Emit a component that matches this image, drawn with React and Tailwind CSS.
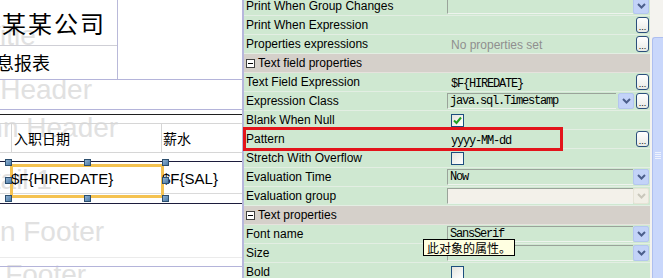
import React from "react";

const rows = [
  { label: "Print When Group Changes", kind: "combo" },
  { label: "Print When Expression", kind: "dots" },
  { label: "Properties expressions", kind: "dots", hint: "No properties set" },
  { section: "Text field properties" },
  { label: "Text Field Expression", kind: "dots", value: "$F{HIREDATE}" },
  { label: "Expression Class", kind: "comboDots", value: "java.sql.Timestamp" },
  { label: "Blank When Null", kind: "check", checked: true },
  { label: "Pattern", kind: "dots", value: "yyyy-MM-dd" },
  { label: "Stretch With Overflow", kind: "check" },
  { label: "Evaluation Time", kind: "combo", value: "Now" },
  { label: "Evaluation group", kind: "combo", disabled: true },
  { section: "Text properties" },
  { label: "Font name", kind: "combo", value: "SansSerif" },
  { label: "Size", kind: "combo" },
  { label: "Bold", kind: "check" },
];

const DropBtn = ({ disabled }) => (
  <div
    className={`w-[16px] h-[16px] shrink-0 rounded-[2px] border flex items-center justify-center ${
      disabled ? "bg-[#f1efe6] border-[#e6e3d6]" : "bg-[#c3d3f8] border-[#b4c6ef]"
    }`}
  >
    <svg width="9" height="6" viewBox="0 0 9 6">
      <path
        d="M1 1 L4.5 4.5 L8 1"
        fill="none"
        stroke={disabled ? "#c9c7bb" : "#4c5f8c"}
        strokeWidth="2"
      />
    </svg>
  </div>
);

const DotsBtn = () => (
  <div className="w-[13px] h-[16px] shrink-0 rounded-[3px] border border-[#2b4f7c] bg-gradient-to-b from-white to-[#e8ebe6] flex items-end justify-center text-[9px] leading-[9px] text-black">
    ...
  </div>
);

const Check = ({ checked }) => (
  <div className="w-[13px] h-[13px] border border-[#1c4d7e] bg-gradient-to-br from-[#e4e4de] to-white flex items-center justify-center">
    {checked && (
      <svg width="9" height="9" viewBox="0 0 9 9">
        <path d="M1 4.5 L3.5 7 L8 1.5" fill="none" stroke="#21a121" strokeWidth="2" />
      </svg>
    )}
  </div>
);

const Mono = ({ children }) => (
  <span className="font-['Liberation_Mono',monospace] text-[12px] tracking-[-1.2px] text-black">
    {children}
  </span>
);

function Value({ row }) {
  if (row.kind === "check") {
    return (
      <div className="flex items-center h-full pl-[4px]">
        <Check checked={row.checked} />
      </div>
    );
  }
  if (row.kind === "dots") {
    return (
      <div className="flex items-center h-full pl-[4px] pr-[1px]">
        <div className="flex-1 truncate">
          {row.hint ? (
            <span className="text-[12px] text-[#8f8f8f]">{row.hint}</span>
          ) : (
            <Mono>{row.value}</Mono>
          )}
        </div>
        <DotsBtn />
      </div>
    );
  }
  const field = (
    <div
      className={`flex-1 h-[16px] flex items-center pl-[2px] border-t border-l border-[#9aa39a] border-b border-b-[#eef3ee] ${
        row.disabled ? "bg-[#f3f1ea]" : ""
      }`}
    >
      <Mono>{row.value}</Mono>
    </div>
  );
  if (row.kind === "comboDots") {
    return (
      <div className="flex items-center h-full gap-[2px] pr-[1px]">
        {field}
        <DropBtn />
        <DotsBtn />
      </div>
    );
  }
  return (
    <div className="flex items-center h-full pr-[1px]">
      {field}
      <DropBtn disabled={row.disabled} />
    </div>
  );
}

const Ghost = ({ children, className }) => (
  <div
    className={`absolute whitespace-nowrap leading-none text-[28px] text-[#e1e1e1] font-['Liberation_Sans',Arial,sans-serif] ${className}`}
  >
    {children}
  </div>
);

const Handle = ({ className }) => (
  <div
    className={`absolute w-[7px] h-[7px] border border-[#2d4f6e] bg-gradient-to-br from-[#8fb1d2] to-[#4b7aa6] ${className}`}
  />
);

function Designer() {
  return (
    <div className="relative w-[244px] h-[278px] shrink-0 overflow-hidden bg-white border-r-2 border-r-[#b7b7dc] font-['Liberation_Sans',Arial,sans-serif]">
      {/* ghost band names */}
      <Ghost className="left-[-16px] top-[22px] text-[26px]">Title</Ghost>
      <Ghost className="left-[-73px] top-[76px]">Page Header</Ghost>
      <Ghost className="left-[-78px] top-[114px]">Column Header</Ghost>
      <Ghost className="left-[-43px] top-[166px]">Detail 1</Ghost>
      <Ghost className="left-[-81px] top-[218px]">Column Footer</Ghost>
      <Ghost className="left-[-68px] top-[261px]">Page Footer</Ghost>

      <div className="relative flex flex-col">
        {/* title */}
        <div className="h-[80px] border-b border-[#b4b4da] flex">
          <div className="w-[118px] border-r border-[#b9b9d9] flex flex-col">
            <div className="h-[46px] border-b border-[#cfcfd6] flex items-center pl-[2px] text-[24px] tracking-[2px] text-black font-['Noto_Sans_CJK_SC',sans-serif]">
              某某公司
            </div>
            <div className="flex-1 flex items-center text-[18px] text-black font-['Noto_Sans_CJK_SC',sans-serif] -ml-[4px]">
              息报表
            </div>
          </div>
        </div>
        {/* page header */}
        <div className="h-[30px] border-b border-[#b4b4da]" />
        {/* column header */}
        <div className="h-[51px] flex flex-col">
          <div className="h-[5px] border-b border-[#202020]" />
          <div className="h-[8px]" />
          <div className="h-[30px] flex border-y border-[#d6d6d6] text-[14px] text-black font-['Noto_Sans_CJK_SC',sans-serif]">
            <div className="w-[12px] border-r border-[#d6d6d6]" />
            <div className="w-[150px] border-r border-[#d6d6d6] flex items-center pl-[2px]">入职日期</div>
            <div className="flex-1 flex items-center pl-[1px]">薪水</div>
          </div>
        </div>
        {/* detail */}
        <div className="relative h-[43px] border-y border-[#1c1c3c]">
          <div className="absolute left-[0px] right-[0px] top-[31px] border-b border-[#dadada]" />
          <div className="absolute left-[10px] top-[2px] w-[154px] h-[34px] border-[3px] border-[#f4c251]" />
          <div className="absolute left-[11px] top-[6px] text-[15px] text-black">$F{"{"}HIREDATE{"}"}</div>
          <div className="absolute left-[162px] top-[6px] text-[15px] text-black">$F{"{"}SAL{"}"}</div>
          <Handle className="left-[5px] top-[-3px]" />
          <Handle className="left-[84px] top-[-3px]" />
          <Handle className="left-[162px] top-[-3px]" />
          <Handle className="left-[5px] top-[15px]" />
          <Handle className="left-[162px] top-[15px]" />
          <Handle className="left-[5px] top-[33px]" />
          <Handle className="left-[84px] top-[33px]" />
          <Handle className="left-[162px] top-[33px]" />
        </div>
        {/* column footer */}
        <div className="h-[63px] border-b border-[#b4b4da] flex flex-col">
          <div className="h-[54px] border-b border-[#ebebeb]" />
        </div>
        <div className="h-[20px]" />
      </div>
    </div>
  );
}

function Properties() {
  return (
    <div className="flex-1 h-[278px] overflow-hidden bg-[#cfe8d1] font-['Liberation_Sans',Arial,sans-serif]">
      <div className="-mt-[3px] flex flex-col">
        {rows.map((row, i) =>
          row.section ? (
            <div
              key={i}
              className="h-[19px] bg-[#d5d0ca] border-b border-[#e6e2dd] flex items-center pl-[2px] text-[12px] text-black"
            >
              <div className="w-[9px] h-[9px] border border-[#404040] bg-white flex items-center justify-center mr-[3px]">
                <div className="w-[5px] h-[1px] bg-black" />
              </div>
              {row.section}
            </div>
          ) : (
            <div key={i} className="h-[19px] border-b border-[#e3eee3] flex">
              <div className="w-[203px] flex items-center pl-[2px] text-[12px] text-black whitespace-nowrap">
                {row.label}
              </div>
              <div className="flex-1">
                <Value row={row} />
              </div>
            </div>
          )
        )}
      </div>
    </div>
  );
}

function Scrollbar() {
  return (
    <div className="w-[13px] h-[278px] shrink-0 bg-[#f4f3ef] flex flex-col">
      <div className="h-[37px]" />
      <div className="flex-1 ml-[2px] rounded-tl-[3px] border-l border-t border-[#aebff0] bg-[#c9d7fb] flex flex-col items-center pt-[114px] gap-[1px]">
        <div className="w-[6px] h-[1px] bg-[#eef2fe]" />
        <div className="w-[6px] h-[1px] bg-[#eef2fe]" />
        <div className="w-[6px] h-[1px] bg-[#eef2fe]" />
        <div className="w-[6px] h-[1px] bg-[#eef2fe]" />
      </div>
    </div>
  );
}

export default function App() {
  return (
    <div className="relative w-[663px] h-[278px] overflow-hidden flex bg-white">
      <Designer />
      <Properties />
      <Scrollbar />
      {/* red highlight */}
      <div className="absolute left-[243px] top-[127px] w-[320px] h-[24px] border-[3px] border-[#e3141b]" />
      {/* tooltip */}
      <div className="absolute left-[423px] top-[239px] h-[17px] bg-[#ffffe1] border border-black flex items-center pl-[3px] pr-[3px] whitespace-nowrap text-[12px] leading-none text-black font-['Noto_Sans_CJK_SC',sans-serif]">
        此对象的属性。
      </div>
    </div>
  );
}
